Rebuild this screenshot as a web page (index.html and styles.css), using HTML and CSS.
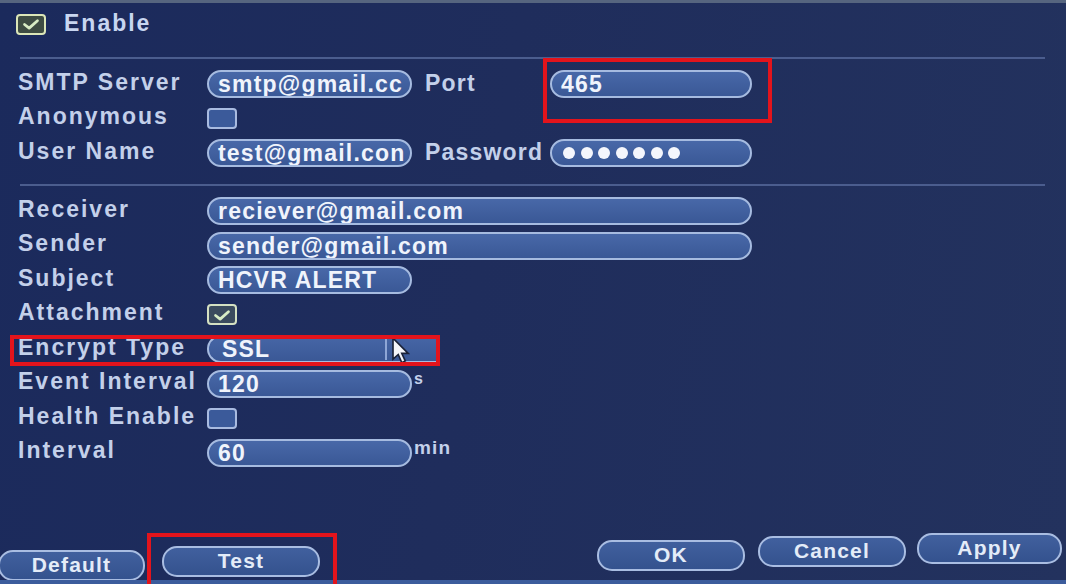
FILE: index.html
```html
<!DOCTYPE html>
<html>
<head>
<meta charset="utf-8">
<link rel="stylesheet" href="styles.css">
</head>
<body>
<div class="top-edge"></div>
<main class="form">
  <div class="enable-row">
    <span class="chk chk-on chk-enable"><svg viewBox="0 0 26 17" class="tick"><path d="M6 9 L11 13 L20 5" /></svg></span>
    <span class="enable-text">Enable</span>
  </div>
  <div class="sep sep-first"></div>
  <section class="group">
    <div class="row">
      <span class="label">SMTP Server</span>
      <span class="pill short">smtp@gmail.cc</span>
      <span class="label2">Port</span>
      <span class="annot-wrap">
        <span class="pill mid">465</span>
        <span class="redbox redbox-port"></span>
      </span>
    </div>
    <div class="row">
      <span class="label">Anonymous</span>
      <span class="chk"></span>
    </div>
    <div class="row">
      <span class="label">User Name</span>
      <span class="pill short">test@gmail.con</span>
      <span class="label2">Password</span>
      <span class="pill mid dots">
        <i class="dot"></i><i class="dot"></i><i class="dot"></i><i class="dot"></i><i class="dot"></i><i class="dot"></i><i class="dot"></i>
      </span>
    </div>
  </section>
  <div class="sep sep-second"></div>
  <section class="group">
    <div class="row">
      <span class="label">Receiver</span>
      <span class="pill long">reciever@gmail.com</span>
    </div>
    <div class="row">
      <span class="label">Sender</span>
      <span class="pill long">sender@gmail.com</span>
    </div>
    <div class="row">
      <span class="label">Subject</span>
      <span class="pill short">HCVR ALERT</span>
    </div>
    <div class="row">
      <span class="label">Attachment</span>
      <span class="chk chk-on"><svg viewBox="0 0 26 17" class="tick"><path d="M6 9 L11 13 L20 5" /></svg></span>
    </div>
    <div class="row row-annot">
      <span class="label">Encrypt Type</span>
      <span class="dropdown">
        <span class="dd-value">SSL</span>
        <span class="dd-divider"></span>
        <svg class="cursor" viewBox="0 0 16 24"><path d="M2 1 L2 19 L6.5 15 L9.5 22 L12.5 20.5 L9.5 14 L15 14 Z" /></svg>
      </span>
      <span class="redbox redbox-encrypt"></span>
    </div>
    <div class="row">
      <span class="label">Event Interval</span>
      <span class="pill short">120</span>
      <span class="unit unit-s">s</span>
    </div>
    <div class="row">
      <span class="label">Health Enable</span>
      <span class="chk"></span>
    </div>
    <div class="row">
      <span class="label">Interval</span>
      <span class="pill short">60</span>
      <span class="unit">min</span>
    </div>
  </section>
</main>
<footer class="footer">
  <div class="btn-group">
    <span class="btn btn-default">Default</span>
    <span class="annot-wrap btn-test-wrap">
      <span class="btn btn-test">Test</span>
      <span class="redbox redbox-test"></span>
    </span>
  </div>
  <div class="btn-group btn-group-right">
    <span class="btn btn-ok">OK</span>
    <span class="btn btn-cancel">Cancel</span>
    <span class="btn btn-apply">Apply</span>
  </div>
</footer>
<div class="bottom-strip"></div>
</body>
</html>
```

FILE: styles.css
```css
html, body {
  margin: 0;
  padding: 0;
}
body {
  width: 1066px;
  height: 584px;
  overflow: hidden;
  display: flex;
  flex-direction: column;
  background: linear-gradient(100deg, #1b2a5c 0%, #1f2d5c 45%, #23325e 100%);
  font-family: "Liberation Sans", Arial, sans-serif;
  font-weight: bold;
  color: #c3d0ea;
  font-size: 23px;
  letter-spacing: 1.2px;
}
.top-edge {
  height: 3px;
  background: #56657f;
  flex: none;
}
.form {
  padding-left: 18px;
  flex: none;
}
.enable-row {
  height: 42px;
  display: flex;
  align-items: center;
  margin-left: -2px;
  gap: 18px;
}
.enable-text {
  color: #c8d6f0;
  margin-top: -2px;
  letter-spacing: 2px;
}
.sep {
  height: 2px;
  background: #4b5d8e;
  margin-left: 2px;
  width: 1025px;
}
.sep-first {
  margin-top: 12px;
  margin-bottom: 8px;
}
.sep-second {
  margin-top: 13.5px;
  margin-bottom: 8px;
}
.row {
  height: 34.5px;
  display: flex;
  align-items: center;
}
.row-annot {
  position: relative;
}
.label {
  width: 189px;
  flex: none;
  margin-top: -4px;
  letter-spacing: 2px;
  white-space: nowrap;
}
.label2 {
  width: 125px;
  margin-left: 13px;
  flex: none;
  margin-top: -2px;
}
.pill {
  box-sizing: border-box;
  height: 28px;
  border: 2px solid #a6bbe0;
  border-radius: 14px;
  background: linear-gradient(#4868a8, #3a5896);
  color: #f0f4fc;
  padding-left: 9px;
  display: flex;
  align-items: center;
  line-height: 24px;
  white-space: nowrap;
  overflow: hidden;
  flex: none;
}
.short { width: 205px; }
.mid { width: 202px; }
.long { width: 545px; }
.dots {
  gap: 5.5px;
  padding-left: 11px;
}
.dot {
  width: 12px;
  height: 12px;
  border-radius: 50%;
  background: #f4f6fc;
  flex: none;
}
.annot-wrap {
  position: relative;
  display: inline-flex;
}
.redbox {
  position: absolute;
  box-sizing: border-box;
  border: 4px solid #e3141c;
  pointer-events: none;
}
.redbox-port {
  left: -7px;
  top: -12px;
  width: 229px;
  height: 65px;
}
.redbox-encrypt {
  left: -8px;
  top: 3px;
  width: 430px;
  height: 31px;
}
.redbox-test {
  left: -15px;
  top: -13px;
  width: 190px;
  height: 64px;
}
.chk {
  box-sizing: border-box;
  width: 30px;
  height: 21px;
  border: 2px solid #a9bbe0;
  border-radius: 4px;
  background: #3b5a9a;
  display: inline-flex;
  align-items: center;
  justify-content: center;
  flex: none;
}
.chk-on {
  border-color: #d4e0c2;
  background: #3b4b5e;
}
.chk-enable {
  border-color: #dbe6b8;
  background: #3e4c42;
}
.tick {
  width: 24px;
  height: 16px;
}
.tick path {
  fill: none;
  stroke: #d8ecc4;
  stroke-width: 3;
  stroke-linecap: round;
  stroke-linejoin: round;
}
.dropdown {
  box-sizing: border-box;
  width: 233px;
  height: 28px;
  border: 2px solid #a6bbe0;
  border-right: none;
  border-radius: 14px 0 0 14px;
  background: linear-gradient(#4666a6, #3a5896);
  color: #f0f4fc;
  display: flex;
  align-items: center;
  padding-left: 13px;
  flex: none;
}
.dd-value {
  width: 163px;
}
.dd-divider {
  width: 2px;
  height: 22px;
  background: #8ea6d6;
}
.cursor {
  width: 20px;
  height: 28px;
  margin-left: 3px;
  margin-top: 4px;
}
.cursor path {
  fill: #f4f6fa;
  stroke: #1a2238;
  stroke-width: 1.4;
}
.unit {
  margin-left: 2px;
  font-size: 19px;
  margin-top: -10px;
  color: #c3d0ea;
}
.unit-s {
  font-size: 16px;
}
.footer {
  margin-top: auto;
  height: 50px;
  display: flex;
  align-items: flex-start;
  flex: none;
}
.btn-group {
  display: flex;
  align-items: flex-start;
}
.btn-group-right {
  margin-left: auto;
  padding-right: 4px;
}
.btn {
  box-sizing: border-box;
  height: 31px;
  border: 2px solid #a9bde2;
  border-radius: 15px;
  background: linear-gradient(#41609e, #34528e);
  color: #e4ecf8;
  display: flex;
  align-items: center;
  justify-content: center;
  font-size: 21px;
  padding-bottom: 2px;
  flex: none;
}
.btn-default {
  width: 147px;
  margin-left: -2px;
  margin-top: 20px;
}
.btn-test-wrap {
  margin-left: 17px;
  margin-top: 16px;
}
.btn-test {
  width: 158px;
}
.btn-ok {
  width: 148px;
  margin-top: 10px;
}
.btn-cancel {
  width: 148px;
  margin-left: 13px;
  margin-top: 6px;
}
.btn-apply {
  width: 145px;
  margin-left: 11px;
  margin-top: 3px;
}
.bottom-strip {
  height: 4px;
  background: #3c5c9c;
  flex: none;
}
```
